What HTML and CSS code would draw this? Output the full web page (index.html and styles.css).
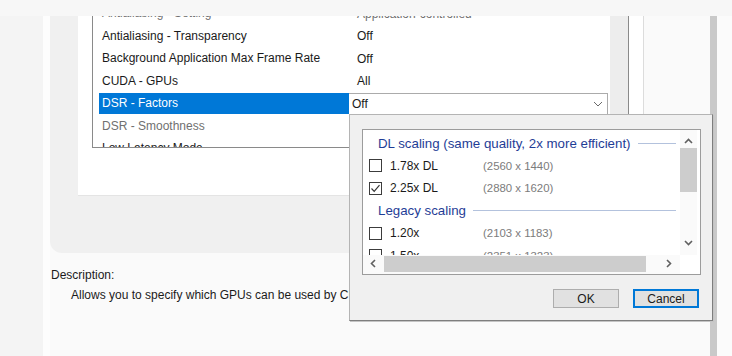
FILE: index.html
```html
<!DOCTYPE html>
<html lang="en">
<head>
    <meta charset="UTF-8">
    <title>Manage 3D settings - DSR Factors</title>
    <link rel="stylesheet" href="styles.css">
</head>
<body>
    <div class="top-strip"></div>
    <div class="desk">
        <div class="edge"></div>
        <div class="gutter"></div>
        <div class="window">
            <div class="panel">
                <div class="sheet">
                    <div class="settings">
                        <div class="rows">
                            <div class="row disabled"><span class="name">Antialiasing - Setting</span><span class="value">Application-controlled</span></div>
                            <div class="row"><span class="name">Antialiasing - Transparency</span><span class="value">Off</span></div>
                            <div class="row"><span class="name">Background Application Max Frame Rate</span><span class="value">Off</span></div>
                            <div class="row"><span class="name">CUDA - GPUs</span><span class="value">All</span></div>
                            <div class="row selected">
                                <span class="name">DSR - Factors</span>
                                <span class="combo">Off
                                    <svg class="chevron" width="10" height="6" viewBox="0 0 10 6"><polyline points="1,1 5,5 9,1" fill="none" stroke="#6a6a6a" stroke-width="1"/></svg>
                                </span>
                            </div>
                            <div class="row disabled"><span class="name">DSR - Smoothness</span><span class="value">33%</span></div>
                            <div class="row"><span class="name">Low Latency Mode</span><span class="value">Off</span></div>
                        </div>
                        <div class="track"></div>
                    </div>
                </div>
            </div>
            <div class="desc">
                <div>Description:</div>
                <div class="desc-text">Allows you to specify which GPUs can be used by CUDA applications.</div>
            </div>
        </div>
        <div class="band"></div>
        <div class="rest"></div>
    </div>

    <div class="popup">
        <div class="factors">
            <div class="factor-list">
                <div class="group"><span>DL scaling (same quality, 2x more efficient)</span><i></i></div>
                <div class="factor">
                    <span class="box"></span><span class="label">1.78x DL</span><span class="res">(2560 x 1440)</span>
                </div>
                <div class="factor">
                    <span class="box"><svg width="11" height="11" viewBox="0 0 11 11"><polyline points="1.5,5.5 4.2,8.3 9.5,2.2" fill="none" stroke="#333" stroke-width="1.2"/></svg></span><span class="label">2.25x DL</span><span class="res">(2880 x 1620)</span>
                </div>
                <div class="group"><span>Legacy scaling</span><i></i></div>
                <div class="factor">
                    <span class="box"></span><span class="label">1.20x</span><span class="res">(2103 x 1183)</span>
                </div>
                <div class="factor">
                    <span class="box"></span><span class="label">1.50x</span><span class="res">(2351 x 1323)</span>
                </div>
            </div>
            <div class="vbar">
                <svg width="9" height="6" viewBox="0 0 9 6"><polyline points="1,5 4.5,1.5 8,5" fill="none" stroke="#606060" stroke-width="1.6"/></svg>
                <div class="vthumb"></div>
                <div class="spacer"></div>
                <svg width="9" height="6" viewBox="0 0 9 6"><polyline points="1,1 4.5,4.5 8,1" fill="none" stroke="#606060" stroke-width="1.6"/></svg>
            </div>
            <div class="hbar">
                <svg width="6" height="9" viewBox="0 0 6 9"><polyline points="5,1 1.5,4.5 5,8" fill="none" stroke="#606060" stroke-width="1.6"/></svg>
                <div class="hthumb"></div>
                <svg width="6" height="9" viewBox="0 0 6 9"><polyline points="1,1 4.5,4.5 1,8" fill="none" stroke="#606060" stroke-width="1.6"/></svg>
            </div>
            <div class="corner"></div>
        </div>
        <div class="buttons">
            <button>OK</button>
            <button class="focused">Cancel</button>
        </div>
    </div>
</body>
</html>
```

FILE: styles.css
```css
body {
    margin: 0;
    width: 732px;
    height: 356px;
    overflow: hidden;
    position: relative;
    background-color: #FBFBFB;
    font-family: "Liberation Sans", Arial, sans-serif;
    font-size: 12px;
    color: #1A1A1A;
}
.top-strip {
    height: 16px;
    background-color: #F7F7F7;
}
.desk {
    display: flex;
    height: 340px;
}
.edge {
    width: 43px;
    background-color: #F4F4F4;
}
.gutter {
    width: 7px;
    background-color: #FDFDFD;
}
.window {
    width: 660px;
    background-color: #FAFAFA;
}
.panel {
    width: 566px;
    height: 237px;
    padding-left: 28px;
    background-color: #F0F0F0;
    border-bottom-left-radius: 12px;
}
.sheet {
    height: 179px;
    padding-left: 14px;
    background-color: #FFFFFF;
    border-right: 1px solid #DCDCDC;
    border-bottom: 1px solid #E4E4E4;
}
.settings {
    display: flex;
    width: 535px;
    height: 131px;
    overflow: hidden;
    border: 1px solid #8A8A8A;
    border-top: none;
}
.rows {
    flex: 1;
    margin-top: -13.75px;
    padding-left: 6px;
}
.row {
    display: flex;
    align-items: center;
    height: 22.5px;
    white-space: nowrap;
}
.row .name {
    width: 247px;
    padding-left: 3px;
    line-height: 21px;
}
.row .value {
    padding-left: 8px;
}
.row.disabled {
    color: #707070;
}
.row.selected .name {
    background-color: #0078D7;
    color: #FFFFFF;
}
.combo {
    display: flex;
    align-items: center;
    justify-content: space-between;
    box-sizing: border-box;
    width: 259px;
    height: 22px;
    padding: 0 4px 0 3px;
    background-color: #FFFFFF;
    border: 1px solid #ABABAB;
    border-left: none;
}
.track {
    width: 18px;
    background-color: #EDEDED;
}
.desc {
    padding: 12px 0 0 1px;
    line-height: 20px;
    white-space: nowrap;
}
.desc-text {
    padding-left: 20px;
}
.band {
    width: 7px;
    background-color: #C9C9C9;
}
.rest {
    flex: 1;
    background-color: #FBFBFB;
}

/* DSR factors dropdown */
.popup {
    position: absolute;
    left: 349px;
    top: 114px;
    width: 364px;
    height: 207px;
    box-sizing: border-box;
    background-color: #F0F0F0;
    border: 1px solid #B4B4B4;
    border-right-color: #7E7E7E;
    border-bottom-color: #7E7E7E;
    box-shadow: 1px 1px 0 #C4C4C4;
}
.factors {
    display: grid;
    grid-template-columns: 317px 20px;
    grid-template-rows: 125px 19px;
    width: 337px;
    margin: 14px 0 0 12px;
    background-color: #FFFFFF;
    border: 1px solid #9C9C9C;
}
.factor-list {
    overflow: hidden;
    padding-top: 2px;
}
.group {
    display: flex;
    align-items: center;
    height: 22.5px;
    padding-left: 15px;
    font-size: 13.3px;
    color: #1F3D96;
    white-space: nowrap;
}
.group i {
    flex: 1;
    height: 1px;
    margin: 0 4px 0 7px;
    background-color: #B3C2DD;
}
.factor {
    display: flex;
    align-items: center;
    height: 22.5px;
    padding-left: 6px;
    white-space: nowrap;
}
.box {
    display: flex;
    align-items: center;
    justify-content: center;
    width: 11px;
    height: 11px;
    border: 1px solid #3C3C3C;
    background-color: #FFFFFF;
}
.label {
    width: 93px;
    padding-left: 8px;
}
.res {
    font-size: 11.4px;
    color: #7C7C7C;
}
.vbar {
    display: flex;
    flex-direction: column;
    align-items: center;
    width: 17px;
    padding-top: 8px;
    background-color: #FAFAFA;
}
.vthumb {
    width: 17px;
    height: 44px;
    margin-top: 4px;
    background-color: #CDCDCD;
}
.vbar .spacer {
    flex: 1;
}
.vbar svg:last-child {
    margin-bottom: 9px;
}
.hbar {
    display: flex;
    align-items: center;
    padding: 0 8px 2px 7px;
    background-color: #FAFAFA;
}
.hthumb {
    width: 262px;
    height: 16px;
    margin: 0 20px 0 8px;
    background-color: #CDCDCD;
}
.corner {
    background-color: #FFFFFF;
}
.buttons {
    display: flex;
    justify-content: flex-end;
    gap: 14px;
    padding: 14px 13px 0 0;
}
button {
    box-sizing: border-box;
    width: 66px;
    height: 19px;
    padding: 0;
    font-family: "Liberation Sans", Arial, sans-serif;
    font-size: 12px;
    color: #1A1A1A;
    background-color: #E1E1E1;
    border: 1px solid #ADADAD;
}
button.focused {
    border: 2px solid #0078D7;
}
```
